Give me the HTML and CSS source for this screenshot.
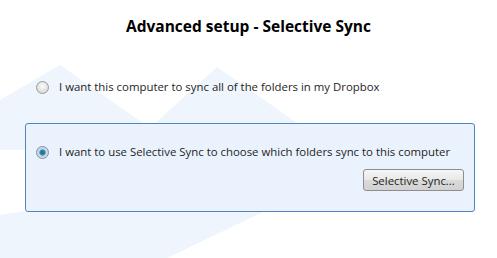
FILE: index.html
```html
<!DOCTYPE html>
<html lang="en">
<head>
  <meta charset="UTF-8" />
  <title>Advanced setup - Selective Sync</title>
  <link rel="stylesheet" href="styles.css">
</head>
<body>

<div class="wizard">
  <h2 class="title">Advanced setup - Selective Sync</h2>

  <label class="option">
    <span class="radio"></span>
    <span class="label-text">I want this computer to sync all of the folders in my Dropbox</span>
  </label>

  <div class="option-box">
    <label class="option">
      <span class="radio checked"></span>
      <span class="label-text">I want to use Selective Sync to choose which folders sync to this computer</span>
    </label>
    <div class="actions">
      <button class="btn">Selective Sync...</button>
    </div>
  </div>
</div>

</body>
</html>
```

FILE: styles.css
```css
html, body {
  margin: 0;
  height: 100%;
}
body {
  font-family: "Open Sans", "DejaVu Sans", sans-serif;
  color: #1a1a1a;
  background-color: #fff;
  /* faint dropbox shapes behind the wizard */
  background-image: url("data:image/svg+xml;utf8,<svg xmlns='http://www.w3.org/2000/svg' width='497' height='258'><g fill='%23eef5fc'><polygon points='0,100 60,65 150,128 25,150 0,150'/><polygon points='150,128 217,67 300,125'/><polygon points='0,215 25,211 265,211 167,258 0,258'/></g></svg>");
  background-repeat: no-repeat;
}
.wizard {
  width: 497px;
  height: 258px;
  box-sizing: border-box;
  padding-top: 16px;
}
.title {
  margin: 0;
  text-align: center;
  font-size: 15.5px;
  font-weight: bold;
  line-height: 20px;
  color: #000;
}
.option {
  display: flex;
  align-items: center;
  gap: 10px;
  font-size: 11.4px;
  line-height: 16px;
  color: #1e1e1e;
}
.wizard > .option {
  margin: 43px 0 0 36px;
}
.radio {
  width: 11px;
  height: 11px;
  border-radius: 50%;
  border: 1px solid #9a9a9a;
  background: radial-gradient(circle at 50% 40%, #fdfdfd 0, #e2e2e2 55%, #cfcfcf 100%);
  flex-shrink: 0;
}
.radio.checked {
  border-color: #7a8fa3;
  background: radial-gradient(circle, #1c6f93 0, #2b86a8 2.5px, #bdd1de 3.5px, #e9f0f5 100%);
}
.option-box {
  margin: 28px 0 0 25px;
  width: 450px;
  height: 89px;
  box-sizing: border-box;
  border: 1px solid #4f86bd;
  border-radius: 3px;
  background: #eaf3fd;
  padding: 20px 10px 0 10px;
}
.actions {
  display: flex;
  justify-content: flex-end;
  margin-top: 9px;
}
.btn {
  width: 101px;
  height: 22px;
  padding: 0;
  border: 1px solid #8e8e8e;
  border-radius: 3px;
  background: linear-gradient(#f6f6f6, #e8e8e8 50%, #dadada 51%, #d2d2d2);
  font-family: "Open Sans", "DejaVu Sans", sans-serif;
  font-size: 11.4px;
  color: #1e1e1e;
}
```
